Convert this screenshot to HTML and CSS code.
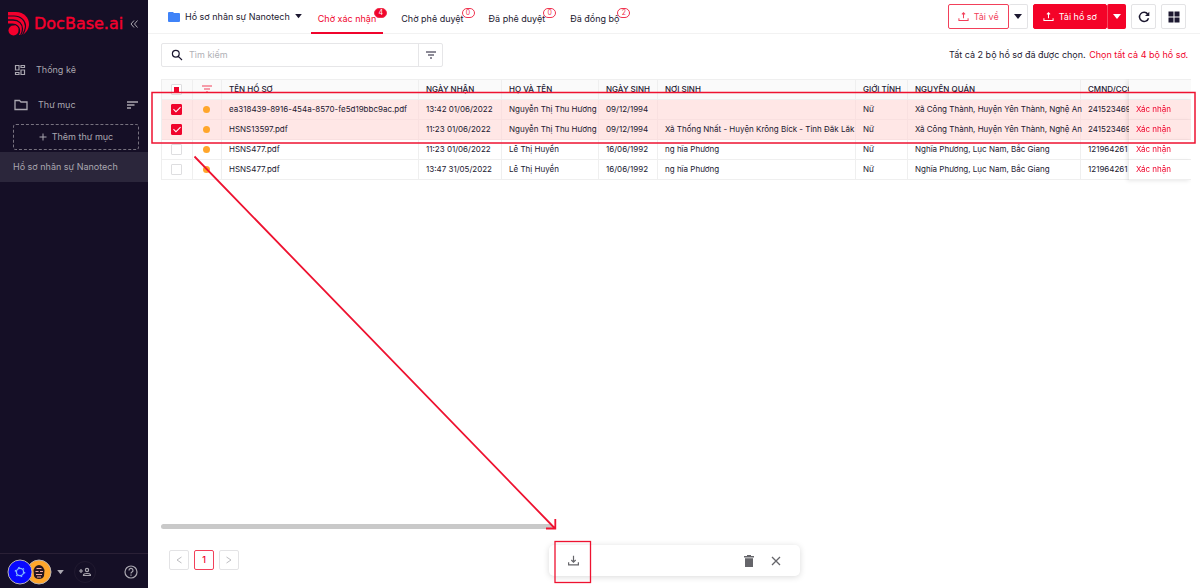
FILE: index.html
```html
<!DOCTYPE html>
<html lang="vi">
<head>
<meta charset="utf-8">
<meta name="viewport" content="width=device-width, initial-scale=1">
<title>DocBase.ai</title>
<link rel="stylesheet" href="styles.css">
</head>
<body>
<svg class="defs" aria-hidden="true">
  <symbol id="i-download" viewBox="0 0 24 24"><path fill="none" stroke="currentColor" stroke-width="2.2" d="M12 3v12M8 11l4 4 4-4M3 15v5h18v-5"/></symbol>
  <symbol id="i-upload" viewBox="0 0 24 24"><path fill="none" stroke="currentColor" stroke-width="2.2" d="M12 16V5M8.500 7.500L12 4l3.500 3.500M2 16v4.500h20V16"/></symbol>
  <symbol id="i-caret" viewBox="0 0 8 6"><path fill="currentColor" d="M0 0h8L4 5z"/></symbol>
  <symbol id="i-filter" viewBox="0 0 12 10"><path stroke="currentColor" stroke-width="1.2" d="M1 2h10M3 5h6M5 8h2"/></symbol>
</svg>
<div class="app">
  <aside class="sidebar">
    <div class="brand">
      <svg class="brand-mark" viewBox="0 0 22 24" aria-hidden="true"><path fill="#f5002d" d="M0 0h8c8 0 13 6 13 12 0 5-3 9-7 11H0z"/><g fill="none" stroke="#150f26"><path stroke-width="1.200" d="M0 4h6c7 0 11.500 5 11.500 10 0 4-1.500 6.500-3.500 9.500"/><path stroke-width="1.300" d="M0 8h5c6 0 9.500 4 9.500 9 0 3-1 4.500-2 6.500"/><path stroke-width="1.500" d="M0 12.300h4.500c4.500 0 7 3 7 6.500 0 2-.5 3-1.500 4.500"/></g><path fill="#150f26" d="M0 12h5l6 6v6H0z"/><circle cx="5.500" cy="18.500" r="5" fill="#f5002d"/></svg>
      <span class="brand-name">DocBase.ai</span>
      <button class="icon-btn collapse" aria-label="Thu gọn"><svg viewBox="0 0 8 8" width="8" height="8"><path fill="none" stroke="currentColor" d="M4 .5L1 4l3 3.500M7.500 .5l-3 3.500 3 3.500"/></svg></button>
    </div>
    <nav class="side-nav">
      <a class="side-item" href="#stats"><svg viewBox="0 0 12 12" width="12" height="12"><path fill="none" stroke="currentColor" stroke-width="1.200" d="M1.500 1.500h3.500v4.500H1.500zM7 1.500h3.500v2H7zM1.500 8.500h3.500v2H1.500zM7 6h3.500v4.500H7z"/></svg>Thống kê</a>
      <div class="side-item folder"><svg viewBox="0 0 14 12" width="14" height="12"><path fill="none" stroke="currentColor" stroke-width="1.300" d="M1 1.500h4.500l1.500 1.500h6v7.500H1z"/></svg><a href="#folders">Thư mục</a>
        <button class="icon-btn sort" aria-label="Sắp xếp"><svg viewBox="0 0 11 8" width="11" height="8"><path stroke="currentColor" stroke-width="1.300" d="M0 1h11M0 4h7.500M0 7h4"/></svg></button>
      </div>
      <button class="add-folder"><svg viewBox="0 0 8 8" width="8" height="8"><path stroke="currentColor" d="M4 .5v7M.5 4h7"/></svg>Thêm thư mục</button>
      <a class="folder-link" href="#nanotech">Hồ sơ nhân sự Nanotech</a>
    </nav>
    <footer class="side-foot">
      <div class="avatars">
        <svg class="avatar" viewBox="0 0 26 26"><circle cx="13" cy="13" r="12" fill="#0808ff" stroke="#b9b4b4"/><circle cx="13" cy="13" r="3.600" fill="none" stroke="#7fb4ff" stroke-width="1.300"/><circle cx="13" cy="13" r="4.700" fill="none" stroke="#7fb4ff" stroke-width="1.200" stroke-dasharray="1.600 3.320"/></svg>
        <svg class="avatar second" viewBox="0 0 26 26"><circle cx="13" cy="13" r="12" fill="#ffa62b" stroke="#b9b4b4"/><path d="M9 8q4-4 8 0l1.500 3-.5 6q-1 3-5 3t-5-3l-.5-6z" fill="#241620"/><path d="M10.500 9.500h5M9.500 12.500h3M14 12.500h3M10 15.500h6M11 18h4" stroke="#f4a9a0" stroke-width="1.200"/></svg>
      </div>
      <button class="icon-btn" aria-label="Chọn tổ chức"><svg width="7" height="5"><use href="#i-caret"/></svg></button>
      <button class="icon-btn invite" aria-label="Mời thành viên"><svg viewBox="0 0 12 10" width="12" height="10"><g fill="none" stroke="currentColor"><path d="M0 4h4M2 2v4M4.500 8.500V8q0-1.500 3.500-1.500t3.500 1.500v.5z" stroke-width="1.200"/><circle cx="8" cy="3" r="1.600" stroke-width="1.200"/></g></svg></button>
      <button class="icon-btn help" aria-label="Trợ giúp"><svg viewBox="0 0 14 14" width="14" height="14"><g fill="none" stroke="currentColor" stroke-width="1.200"><circle cx="7" cy="7" r="6"/><path d="M5 5.500a2 2 0 1 1 3 1.600q-1 .6-1 1.400M7 9.500v1.300"/></g></svg></button>
    </footer>
  </aside>

  <main class="main">
    <header class="topbar">
      <button class="project"><svg viewBox="0 0 12 10" width="12" height="10"><path fill="#3f83f8" d="M1 0h4l1 1h5q1 0 1 1v7q0 1-1 1H1q-1 0-1-1V1q0-1 1-1z"/></svg>Hồ sơ nhân sự Nanotech<svg width="7" height="5"><use href="#i-caret"/></svg></button>
      <nav class="tabs">
        <a class="tab active" href="#t1">Chờ xác nhận<span class="badge">4</span></a>
        <a class="tab" href="#t2">Chờ phê duyệt<span class="badge">0</span></a>
        <a class="tab" href="#t3">Đã phê duyệt<span class="badge">0</span></a>
        <a class="tab" href="#t4">Đã đồng bộ<span class="badge">2</span></a>
      </nav>
      <div class="actions">
        <div class="split"><button class="btn outline"><svg width="11" height="11"><use href="#i-upload"/></svg>Tải về</button><button class="btn drop" aria-label="Tùy chọn tải về"><svg width="8" height="6"><use href="#i-caret"/></svg></button></div>
        <div class="split"><button class="btn solid"><svg width="11" height="11"><use href="#i-upload"/></svg>Tải hồ sơ</button><button class="btn solid drop" aria-label="Tùy chọn tải hồ sơ"><svg width="8" height="6"><use href="#i-caret"/></svg></button></div>
        <button class="btn square" aria-label="Làm mới"><svg viewBox="0 0 12 12" width="12" height="12"><path fill="none" stroke="currentColor" stroke-width="1.500" d="M9.800 3.200A4.600 4.600 0 1 0 10.500 7.200"/><path fill="currentColor" d="M11.300 .8v4.200H7z"/></svg></button>
        <button class="btn square" aria-label="Dạng lưới"><svg viewBox="0 0 12 12" width="12" height="12"><path fill="currentColor" d="M.5 .5h5v5h-5zM6.500 .5h5v5h-5zM.5 6.500h5v5h-5zM6.500 6.500h5v5h-5z"/></svg></button>
      </div>
    </header>

    <section class="content">
      <div class="tools">
        <div class="search">
          <label class="search-box"><svg viewBox="0 0 12 12" width="12" height="12"><path fill="none" stroke="currentColor" stroke-width="1.200" d="M7.300 7.300L11 11M8.200 4.800a3.400 3.400 0 1 1-6.800 0 3.400 3.400 0 0 1 6.800 0z"/></svg><input type="text" placeholder="Tìm kiếm" aria-label="Tìm kiếm"></label>
          <button class="filter" aria-label="Bộ lọc"><svg width="12" height="10"><use href="#i-filter"/></svg></button>
        </div>
        <p class="selection">Tất cả 2 bộ hồ sơ đã được chọn. <a href="#all">Chọn tất cả 4 bộ hồ sơ.</a></p>
      </div>

      <div class="table-wrap">
        <table>
          <colgroup><col class="c-check"><col class="c-dot"><col class="c-file"><col class="c-recv"><col class="c-name"><col class="c-dob"><col class="c-birth"><col class="c-sex"><col class="c-home"><col class="c-id"><col class="c-rest"><col class="c-act"></colgroup>
          <thead><tr><th class="mid"><input class="partial" type="checkbox" aria-label="Chọn tất cả"></th><th class="mid red"><svg width="12" height="10"><use href="#i-filter"/></svg></th><th>TÊN HỒ SƠ</th><th>NGÀY NHẬN</th><th>HỌ VÀ TÊN</th><th>NGÀY SINH</th><th>NƠI SINH</th><th>GIỚI TÍNH</th><th>NGUYÊN QUÁN</th><th>CMND/CCCD</th><th></th><th class="act"></th></tr></thead>
          <tbody>
            <tr class="picked"><td class="mid"><input type="checkbox" checked aria-label="Chọn hồ sơ 1"></td><td class="mid"><span class="dot"></span></td><td>ea318439-8916-454a-8570-fe5d19bbc9ac.pdf</td><td>13:42 01/06/2022</td><td>Nguyễn Thị Thu Hương</td><td>09/12/1994</td><td></td><td>Nữ</td><td>Xã Công Thành, Huyện Yên Thành, Nghệ An</td><td>241523469</td><td></td><td class="act"><a href="#r1">Xác nhận</a></td></tr>
            <tr class="picked"><td class="mid"><input type="checkbox" checked aria-label="Chọn hồ sơ 2"></td><td class="mid"><span class="dot"></span></td><td>HSNS13597.pdf</td><td>11:23 01/06/2022</td><td>Nguyễn Thị Thu Hương</td><td>09/12/1994</td><td>Xã Thống Nhất - Huyện Krông Bíck - Tỉnh Đăk Lăk</td><td>Nữ</td><td>Xã Công Thành, Huyện Yên Thành, Nghệ An</td><td>241523469</td><td></td><td class="act"><a href="#r2">Xác nhận</a></td></tr>
            <tr><td class="mid"><input type="checkbox" aria-label="Chọn hồ sơ 3"></td><td class="mid"><span class="dot"></span></td><td>HSNS477.pdf</td><td>11:23 01/06/2022</td><td>Lê Thị Huyền</td><td>16/06/1992</td><td>ng hĩa Phương</td><td>Nữ</td><td>Nghĩa Phương, Lục Nam, Bắc Giang</td><td>121964261</td><td></td><td class="act"><a href="#r3">Xác nhận</a></td></tr>
            <tr><td class="mid"><input type="checkbox" aria-label="Chọn hồ sơ 4"></td><td class="mid"><span class="dot"></span></td><td>HSNS477.pdf</td><td>13:47 31/05/2022</td><td>Lê Thị Huyền</td><td>16/06/1992</td><td>ng hĩa Phương</td><td>Nữ</td><td>Nghĩa Phương, Lục Nam, Bắc Giang</td><td>121964261</td><td></td><td class="act"><a href="#r4">Xác nhận</a></td></tr>
          </tbody>
        </table>
      </div>
      <div class="scroll-track"><div class="scroll-thumb"></div></div>
      <nav class="pager" aria-label="Phân trang">
        <button aria-label="Trang trước"><svg viewBox="0 0 6 8" width="6" height="8"><path fill="none" stroke="currentColor" d="M5.500 1L1 4l4.500 3"/></svg></button>
        <button class="current">1</button>
        <button aria-label="Trang sau"><svg viewBox="0 0 6 8" width="6" height="8"><path fill="none" stroke="currentColor" d="M.5 1L5 4 .5 7"/></svg></button>
      </nav>
    </section>
  </main>

  <div class="bulk-bar">
    <button class="icon-btn" aria-label="Tải xuống"><svg width="13" height="13"><use href="#i-download"/></svg></button>
    <button class="icon-btn push" aria-label="Xóa"><svg viewBox="0 0 10 12" width="10" height="12"><path fill="currentColor" d="M3 0h4v1h3v1.500H0V1h3zM1 3.200h8V12H1z"/></svg></button>
    <button class="icon-btn" aria-label="Đóng"><svg viewBox="0 0 10 10" width="10" height="10"><path stroke="currentColor" stroke-width="1.300" d="M1 1l8 8M9 1L1 9"/></svg></button>
  </div>

  <svg class="marks" viewBox="0 0 1200 588" width="1200" height="588" aria-hidden="true">
    <g fill="none" stroke="#ee1230"><rect x="152" y="92.500" width="1043" height="50.500" stroke-width="1.500"/><rect x="555" y="541.500" width="35.500" height="41" stroke-width="1.300"/><path stroke-width="1.800" d="M194.500 156.500L555 528.500M555.300 519v9.500H546"/></g>
  </svg>
</div>
</body>
</html>
```
FILE: styles.css
```css
* { box-sizing: border-box; }
body { margin: 0; font-family: Inter, "Noto Sans", sans-serif; font-size: 9px; line-height: 12px; color: #1c1830; background: #fff; }
a { color: inherit; text-decoration: none; }
button { font: inherit; color: inherit; background: none; border: 0; padding: 0; cursor: pointer; }
svg { display: block; flex: none; }
.defs { position: absolute; width: 0; height: 0; }
.app { position: relative; display: flex; min-height: 100vh; overflow: hidden; }
.icon-btn { display: flex; align-items: center; justify-content: center; }

.sidebar { width: 148px; flex: none; display: flex; flex-direction: column; background: #150f26; color: #aaa7b0; }
.brand { display: flex; align-items: center; height: 47px; padding-left: 8px; gap: 4px; color: #f5002d; }
.brand-mark { width: 22px; height: 24px; }
.brand-name { font-family: "DejaVu Sans", sans-serif; font-size: 16px; line-height: 20px; -webkit-text-stroke: 0.4px #f5002d; }
.collapse { color: #aaa7b0; margin-left: auto; margin-right: 10px; }
.side-nav { display: flex; flex-direction: column; padding-top: 5px; }
.side-item { display: flex; align-items: center; height: 35px; padding: 0 10px 0 14px; gap: 10px; }
.sort { margin-left: auto; }
.add-folder { display: flex; align-items: center; justify-content: center; gap: 5px; height: 26px; margin: 2px 9px 2px 13px; border: 1px dashed #77727f; border-radius: 3px; }
.folder-link { height: 30px; padding: 9px 13px; background: #2b263b; }
.side-foot { margin-top: auto; display: flex; align-items: center; height: 35px; padding: 2px 10px 0 7px; border-top: 1px solid #2a2036; }
.avatars { display: flex; width: 50px; }
.avatar { width: 26px; height: 26px; }
.avatar:first-child { z-index: 1; }
.second { margin-left: -7px; }
.invite { width: 22px; height: 22px; margin-left: 10px; border: 1px solid #211a30; border-radius: 50%; }
.help { margin-left: auto; }

.main { flex: 1; min-width: 0; display: flex; flex-direction: column; }
.topbar { display: flex; height: 34px; padding: 0 14px 0 20px; border-bottom: 1px solid #f2f2f2; }
.project { display: flex; align-items: center; gap: 5px; height: 33px; }
.tabs { display: flex; gap: 11px; margin-left: 9px; }
.tab { display: flex; height: 34px; padding: 13px 7px 0; white-space: nowrap; }
.tab.active { color: #f0042c; border-bottom: 2px solid #f0042c; }
.badge { width: 13px; height: 10px; margin: -5px -11px 0 -2px; border: 1px solid #f0334f; border-radius: 5px; font-size: 7px; line-height: 8px; text-align: center; color: #f0334f; }
.active .badge { background: #f0042c; color: #fff; }
.actions { display: flex; gap: 5px; margin-left: auto; padding-top: 4px; }
.split { display: flex; }
.btn { display: flex; align-items: center; justify-content: center; gap: 5px; height: 25px; border: 1px solid #e3e3e5; border-radius: 2px; padding: 0 9px; white-space: nowrap; }
.btn.outline { border-color: #f2405a; color: #f2405a; }
.btn.solid { background: #f40328; border-color: #f40328; color: #fff; }
.btn.drop { width: 19px; padding: 0; border-left: 0; }
.btn.solid.drop { border-left: 1px solid #f7475f; }
.btn.square { width: 25px; padding: 0; }

.content { flex: 1; display: flex; flex-direction: column; padding: 9px 9px 18px 13px; }
.tools { display: flex; justify-content: space-between; align-items: center; }
.search { display: flex; width: 282px; height: 24px; border: 1px solid #e6e6e8; border-radius: 2px; }
.search-box { flex: 1; display: flex; align-items: center; gap: 6px; padding-left: 9px; }
.search input { flex: 1; min-width: 0; border: 0; outline: 0; padding: 0; font: inherit; background: none; }
.search input::placeholder { color: #b0b0b5; opacity: 1; }
.filter { width: 24px; display: flex; align-items: center; justify-content: center; border-left: 1px solid #e6e6e8; }
.selection { margin: 0; padding-right: 3px; }
.selection a { color: #f0042c; margin-left: 1px; }

.table-wrap { margin-top: 12px; overflow: hidden; padding-bottom: 5px; }
table { width: 2660px; table-layout: fixed; border-collapse: separate; border-spacing: 0; font-size: 8px; line-height: 12px; border-left: 1px solid #eee; }
.c-check { width: 31px; } .c-dot { width: 29px; } .c-file { width: 197px; } .c-recv { width: 83px; }
.c-name { width: 97px; } .c-dob { width: 59px; } .c-birth { width: 198px; } .c-sex { width: 52px; }
.c-home { width: 173px; } .c-id { width: 110px; } .c-act { width: 62px; }
th, td { height: 20px; padding: 0 0 2px 7px; text-align: left; font-weight: 400; white-space: nowrap; border-right: 1px solid #efefef; border-bottom: 1px solid #efefef; background: #fff; }
th { height: 21px; font-weight: 500; background: #fafafa; border-top: 1px solid #efefef; }
.picked td { background: #ffe7e6; border-color: #f9e0e0; }
.mid { padding: 0 1px 1px 0; }
.mid > * { display: block; margin: 0 auto; }
.red { color: #f2405a; }
.act { position: sticky; right: 0; color: #f0042c; box-shadow: -2px 1px 4px #00000018; border-right: 0; }
.dot { width: 7px; height: 7px; border-radius: 50%; background: #ffa62b; }
td input, th input { appearance: none; width: 11px; height: 11px; border: 1px solid #dedee0; border-radius: 1px; background: #fff; }
td input:checked { border-color: #f0042c; background: #f0042c; }
td input:checked::after { content: ""; display: block; width: 3px; height: 6px; margin: 0 auto; border: solid #fff; border-width: 0 1px 1px 0; transform: rotate(45deg); }
.partial::after { content: ""; display: block; width: 5px; height: 5px; margin: 2px; background: #f0042c; }

.scroll-track { margin-top: auto; }
.scroll-thumb { width: 38%; height: 5px; border-radius: 3px; background: #c9c9c9; }
.pager { display: flex; gap: 5px; padding: 21px 0 0 8px; }
.pager button { display: flex; align-items: center; justify-content: center; width: 20px; height: 20px; border: 1px solid #e3e3e5; border-radius: 2px; color: #bdbdc0; }
.pager .current { border-color: #f2405a; color: #f0042c; font-weight: 500; }
.bulk-bar { position: absolute; left: 549px; bottom: 12px; width: 251px; height: 31px; display: flex; align-items: center; gap: 17px; padding: 0 19px 0 18px; background: #fff; border-radius: 5px; box-shadow: 0 1px 6px #00000026; color: #65656a; }
.push { margin-left: auto; }
.marks { position: absolute; left: 0; top: 0; pointer-events: none; }
```
